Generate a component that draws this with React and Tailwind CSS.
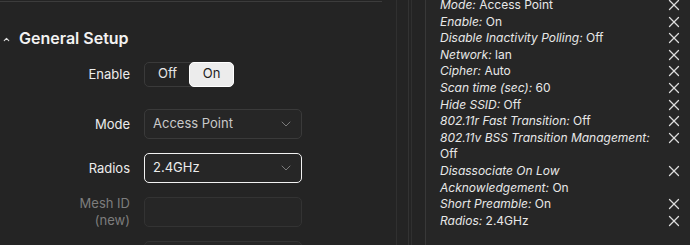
import { ChevronUp, ChevronDown, X } from 'lucide-react';

const changes = [
  ['Mode', 'Access Point'],
  ['Enable', 'On'],
  ['Disable Inactivity Polling', 'Off'],
  ['Network', 'lan'],
  ['Cipher', 'Auto'],
  ['Scan time (sec)', '60'],
  ['Hide SSID', 'Off'],
  ['802.11r Fast Transition', 'Off'],
  ['802.11v BSS Transition Management', 'Off'],
  ['Disassociate On Low Acknowledgement', 'On'],
  ['Short Preamble', 'On'],
  ['Radios', '2.4GHz'],
];

const Row = ({ label, children, muted }) => (
  <div className="flex items-center h-[44px]">
    <div
      className={`w-[130px] text-right text-[13px] leading-[17px] ${
        muted ? 'text-[#7d7d7d]' : 'text-[#ececec]'
      }`}
    >
      {label}
    </div>
    <div className="ml-[14px]">{children}</div>
  </div>
);

const Select = ({ value, focused }) => (
  <div
    className={`w-[158px] h-[30px] rounded-[5px] flex items-center justify-between pl-[8px] pr-[7px] text-[13px] ${
      focused
        ? 'border-[1.5px] border-[#f2f2f2] text-[#ececec] bg-[#262626]'
        : 'border border-[#3a3a3a] text-[#c9c9c9] bg-[#262626]'
    }`}
  >
    <span>{value}</span>
    <ChevronDown size={16} strokeWidth={1.1} className="text-[#9a9a9a]" />
  </div>
);

const App = () => {
  return (
    <div
      className="w-[690px] h-[245px] overflow-hidden bg-[#242424] flex"
      style={{ fontFamily: 'Inter, "Noto Sans", sans-serif' }}
    >
      {/* left form */}
      <div className="w-[382px] shrink-0 border-t border-[#3c3c3c] mt-[1px]">
        <div className="flex items-center h-[20px] mt-[26px] pl-[2px]">
          <ChevronUp size={9} strokeWidth={3} className="text-[#dcdcdc] mt-[3px]" />
          <span className="ml-[8px] text-[16px] font-semibold text-[#f2f2f2]">General Setup</span>
        </div>
        <div className="mt-[4px]">
          <Row label="Enable">
            <div className="flex h-[25px] rounded-[5px] border border-[#3a3a3a] text-[13px]">
              <div className="w-[45px] flex items-center justify-center text-[#e6e6e6]">Off</div>
              <div className="w-[45px] flex items-center justify-center bg-[#ececec] text-[#1e1e1e] rounded-[5px] border border-white -m-[1px]">
                On
              </div>
            </div>
          </Row>
          <div className="h-[6px]" />
          <Row label="Mode">
            <Select value="Access Point" />
          </Row>
          <Row label="Radios">
            <Select value="2.4GHz" focused />
          </Row>
          <Row
            muted
            label={
              <>
                Mesh ID
                <br />
                (new)
              </>
            }
          >
            <div className="w-[158px] h-[30px] rounded-[5px] border border-[#333333] bg-[#262626]" />
          </Row>
          <Row label="">
            <div className="w-[158px] h-[30px] rounded-[5px] border border-[#333333] bg-[#262626]" />
          </Row>
        </div>
      </div>

      {/* scroll gutters */}
      <div className="w-[15px] shrink-0 border-r border-[#303030]" />
      <div className="w-[12px] shrink-0 border-r border-[#333333]" />
      <div className="w-[3px] shrink-0 border-r border-[#303030]" />
      <div className="w-[14px] shrink-0 border-r border-[#383838]" />

      {/* changes panel */}
      <div className="flex-1 bg-[#262626] pl-[14px] pr-[7px]">
        <div className="-mt-[3px] text-[12px] leading-[16.6px] text-[#e8e8e8]">
          {changes.map(([k, v]) => (
            <div key={k} className="flex justify-between items-start">
              <div className="w-[212px]">
                <span className="italic">{k}:</span> <span>{v}</span>
              </div>
              <div className="h-[16px] flex items-center">
                <X size={18} strokeWidth={1.7} className="text-[#dcdcdc]" />
              </div>
            </div>
          ))}
        </div>
      </div>
    </div>
  );
};

export default App;
